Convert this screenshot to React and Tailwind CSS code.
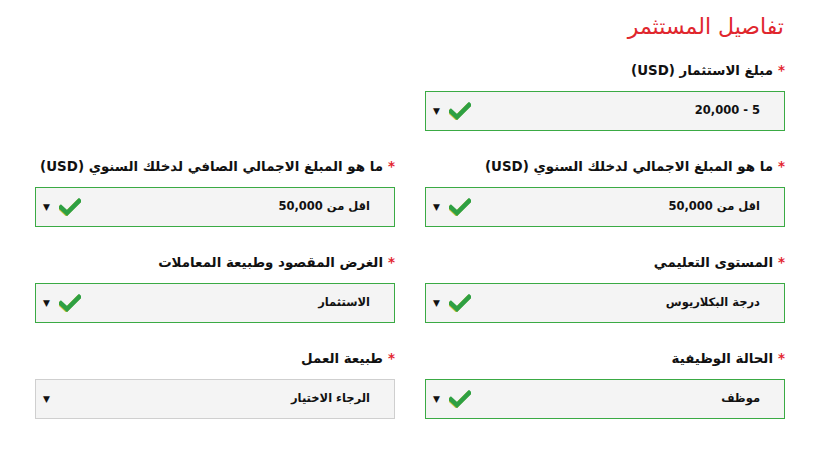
import React from "react";

// ─── Data ─────────────────────────────────────────────────────────────────────

const ROWS = [
  [{ label: "مبلغ الاستثمار (USD)", value: "5 - 20,000", valid: true }, null],
  [
    { label: "ما هو المبلغ الاجمالي لدخلك السنوي (USD)", value: "اقل من 50,000", valid: true },
    { label: "ما هو المبلغ الاجمالي الصافي لدخلك السنوي (USD)", value: "اقل من 50,000", valid: true },
  ],
  [
    { label: "المستوى التعليمي", value: "درجة البكلاريوس", valid: true },
    { label: "الغرض المقصود وطبيعة المعاملات", value: "الاستثمار", valid: true },
  ],
  [
    { label: "الحالة الوظيفية", value: "موظف", valid: true },
    { label: "طبيعة العمل", value: "الرجاء الاختيار", valid: false },
  ],
];

// ─── Sub-components ───────────────────────────────────────────────────────────

const CheckIcon = () => (
  <svg width="22" height="18" viewBox="0 0 22 18" className="shrink-0">
    <path d="M2 9.5 L8 15 L20 3" fill="none" stroke="#c9c23a" strokeWidth="4.5" strokeLinecap="square" transform="translate(-0.8,0.6)" />
    <path d="M2 9.5 L8 15 L20 3" fill="none" stroke="#2ea043" strokeWidth="4.5" strokeLinecap="square" />
  </svg>
);

const SelectBox = ({ value, valid }) => (
  <div
    className={`h-10 flex items-center justify-between pr-6 pl-[7px] bg-[#f4f4f4] border ${
      valid ? "border-[#3aaa44]" : "border-[#cfcfcf]"
    }`}
  >
    <span className="text-[11.5px] font-bold text-[#111]">{value}</span>
    <div className="flex items-center gap-[9px]" dir="ltr">
      <span className="text-[9px] text-[#111] leading-none">▼</span>
      {valid && <CheckIcon />}
    </div>
  </div>
);

const Field = ({ field }) => {
  if (!field) return <div />;
  return (
    <div>
      <div className="h-5 flex items-center mb-[10px] text-[13.4px] font-bold text-[#111] whitespace-nowrap">
        <span className="text-[#e3262f] ml-[5px]">*</span>
        <span>{field.label}</span>
      </div>
      <SelectBox value={field.value} valid={field.valid} />
    </div>
  );
};

// ─── Main Component ───────────────────────────────────────────────────────────

export default function App() {
  return (
    <div
      dir="rtl"
      className="w-[826px] h-[454px] bg-white pt-[11px] pr-[41px] pl-[35px] font-['DejaVu_Sans',sans-serif]"
    >
      <h2 className="text-[22px] leading-8 text-[#e0262d] mb-[18px] pr-[1px]">تفاصيل المستثمر</h2>
      <div className="grid grid-cols-2 gap-x-[30px] gap-y-[26px]">
        {ROWS.flat().map((field, i) => (
          <Field key={i} field={field} />
        ))}
      </div>
    </div>
  );
}
